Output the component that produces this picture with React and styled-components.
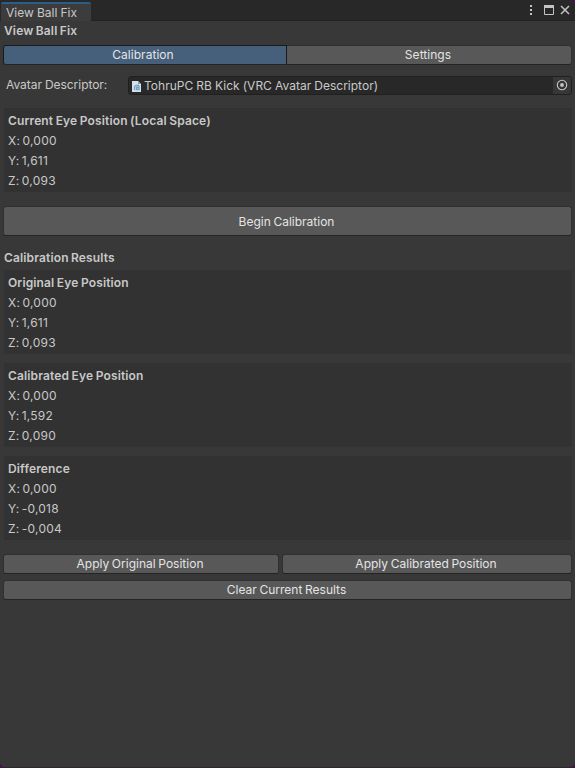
import React from "react";
import styled, { createGlobalStyle } from "styled-components";

const GlobalStyle = createGlobalStyle`
  * { box-sizing: border-box; }
  html, body { margin: 0; height: 100%; background: #383838; overflow: hidden; }
  #root { height: 100%; }
`;

const Window = styled.div`
  display: flex;
  flex-direction: column;
  height: 100vh;
  overflow: hidden;
  background: #383838;
  border-radius: 0 6px 5px 5px;
  border-bottom: 1px solid #302531;
  color: #c8c8c8;
  font: 12px/20px Inter, sans-serif;
  letter-spacing: 0.01px;
  word-spacing: -0.3px;
  white-space: nowrap;
`;

const Backdrop = styled.div`
  background: #4a0d4e;
`;

const TitleBar = styled.header`
  display: flex;
  flex: none;
  justify-content: space-between;
  height: 21px;
  padding: 2px 3px 0 1px;
  background: #282828;
  border-bottom: 1px solid #232323;
`;

const Tab = styled.div`
  width: 90px;
  height: 19px;
  padding-left: 5px;
  line-height: 18px;
  background: #3c3c3c;
  border-top: 2px solid #2c5d87;
  border-radius: 2px 2px 0 0;
`;

const WindowControls = styled.div`
  display: flex;
  height: 16px;

  svg { display: block; }
`;

const Content = styled.main`
  display: flex;
  flex-direction: column;
  padding: 0 3px;
`;

const Heading = styled.h1`
  height: 20px;
  margin: 0 0 0 1px;
  font-size: 12px;
  font-weight: 600;
  line-height: 20px;
  letter-spacing: 0.14px;
  word-spacing: -0.8px;
`;

const SectionHeading = styled(Heading).attrs({ as: "h2" })`
  margin-top: 12px;
  margin-bottom: 2px;
`;

const Toolbar = styled.div`
  display: flex;
  height: 20px;
  margin-top: 4px;
`;

const Button = styled.button`
  flex: ${(p) => (p.$width ? `0 0 ${p.$width}px` : "1")};
  min-width: 0;
  height: ${(p) => p.$height || 20}px;
  padding: ${(p) => (p.$height ? "2px" : 0)} 2px 0 0;
  color: #e4e4e4;
  background: #585858;
  border: 1px solid #303030;
  border-bottom-color: #242424;
  border-radius: 3px;
  font: inherit;
  line-height: 18px;
  letter-spacing: 0;
  word-spacing: -0.7px;
`;

const ToolbarTab = styled(Button)`
  padding-right: ${(p) => (p.$active ? 4 : 2)}px;
  letter-spacing: 0.04px;
  background: ${(p) => (p.$active ? "#46607c" : "#585858")};
  border-color: ${(p) => (p.$active ? "#1a1a1a" : "#303030")};
  border-bottom-color: #242424;
  border-left-width: ${(p) => (p.$active ? 1 : 0)}px;
  border-radius: ${(p) => (p.$active ? "3px 0 0 3px" : "0 3px 3px 0")};
`;

const Field = styled.div`
  display: flex;
  height: 19px;
  margin-top: 11px;
  padding-left: 3px;
  line-height: 18px;
`;

const FieldLabel = styled.label`
  flex: 0 0 122px;
  letter-spacing: -0.04px;
`;

const ObjectInput = styled.div`
  display: flex;
  flex: 1;
  overflow: hidden;
  background: #282828;
  border: 1px solid #202020;
  border-radius: 3px;
`;

const ObjectName = styled.span`
  flex: 1;
  padding-left: 3px;
`;

const ScriptIcon = styled.svg`
  width: 9px;
  height: 11px;
  margin: 4px 0 0 3px;
`;

const Picker = styled.span`
  width: 18px;
  background: #373737;

  svg { display: block; }
`;

const Panel = styled.section`
  height: 84px;
  margin: ${(p) => p.$top}px 0 0 1px;
  padding: 3px 4px 1px;
  background: #323232;
`;

const PanelTitle = styled.h3`
  margin: 0;
  font-size: 12px;
  font-weight: 600;
  line-height: 20px;
  letter-spacing: 0.14px;
  word-spacing: -0.7px;
`;

const Coordinate = styled.div`
  height: 20px;
  letter-spacing: 0.24px;
  word-spacing: -1.3px;
`;

const ButtonRow = styled.div`
  display: flex;
  gap: 3px;
  margin-top: ${(p) => p.$top}px;
`;

function PositionPanel({ title, values, top }) {
  return (
    <Panel $top={top}>
      <PanelTitle>{title}</PanelTitle>
      {["X", "Y", "Z"].map((axis, i) => (
        <Coordinate key={axis}>{axis}: {values[i]}</Coordinate>
      ))}
    </Panel>
  );
}

export default function App() {
  return (
    <Backdrop>
      <GlobalStyle />
      <Window>
        <TitleBar>
          <Tab>View Ball Fix</Tab>
          <WindowControls>
            <svg width="46" height="16" viewBox="0 0 46 16" fill="none">
              <path d="M4 3h2v2H4zM4 7h2v2H4zM4 11h2v2H4z" fill="#c4c4c4" />
              <path d="M18.500 4v8.500h9V4" stroke="#c4c4c4" />
              <path d="M18 3h10v3h-10z" fill="#c4c4c4" />
              <path d="M35 4l8 8M43 4l-8 8" stroke="#c4c4c4" strokeWidth="1.500" />
            </svg>
          </WindowControls>
        </TitleBar>
        <Content>
          <Heading>View Ball Fix</Heading>
          <Toolbar>
            <ToolbarTab $active $width={284}>Calibration</ToolbarTab>
            <ToolbarTab>Settings</ToolbarTab>
          </Toolbar>
          <Field>
            <FieldLabel>Avatar Descriptor:</FieldLabel>
            <ObjectInput>
              <ScriptIcon viewBox="0 0 9 11">
                <path d="M0 0h6l3 3v8H0z" fill="#d5e0e7" />
                <path d="M6 0v3h3z" fill="#8b9ba6" />
                <path d="M7 4.500H4.500A2 2 0 0 0 2.500 6.500V9M7 4.500V8.500H4.500V6.500H7" fill="none" stroke="#6fa5c6" strokeWidth="1.300" />
              </ScriptIcon>
              <ObjectName>TohruPC RB Kick (VRC Avatar Descriptor)</ObjectName>
              <Picker>
                <svg width="18" height="17" viewBox="0 0 18 17">
                  <circle cx="9" cy="8" r="4.700" fill="none" stroke="#c4c4c4" strokeWidth="1.100" />
                  <circle cx="9" cy="8" r="1.900" fill="#c4c4c4" />
                </svg>
              </Picker>
            </ObjectInput>
          </Field>
          <PositionPanel top={13} title="Current Eye Position (Local Space)" values={["0,000", "1,611", "0,093"]} />
          <ButtonRow $top={14}>
            <Button $height={30}>Begin Calibration</Button>
          </ButtonRow>
          <SectionHeading>Calibration Results</SectionHeading>
          <PositionPanel top={0} title="Original Eye Position" values={["0,000", "1,611", "0,093"]} />
          <PositionPanel top={9} title="Calibrated Eye Position" values={["0,000", "1,592", "0,090"]} />
          <PositionPanel top={9} title="Difference" values={["0,000", "-0,018", "-0,004"]} />
          <ButtonRow $top={14}>
            <Button $width={276}>Apply Original Position</Button>
            <Button>Apply Calibrated Position</Button>
          </ButtonRow>
          <ButtonRow $top={6}>
            <Button>Clear Current Results</Button>
          </ButtonRow>
        </Content>
      </Window>
    </Backdrop>
  );
}
